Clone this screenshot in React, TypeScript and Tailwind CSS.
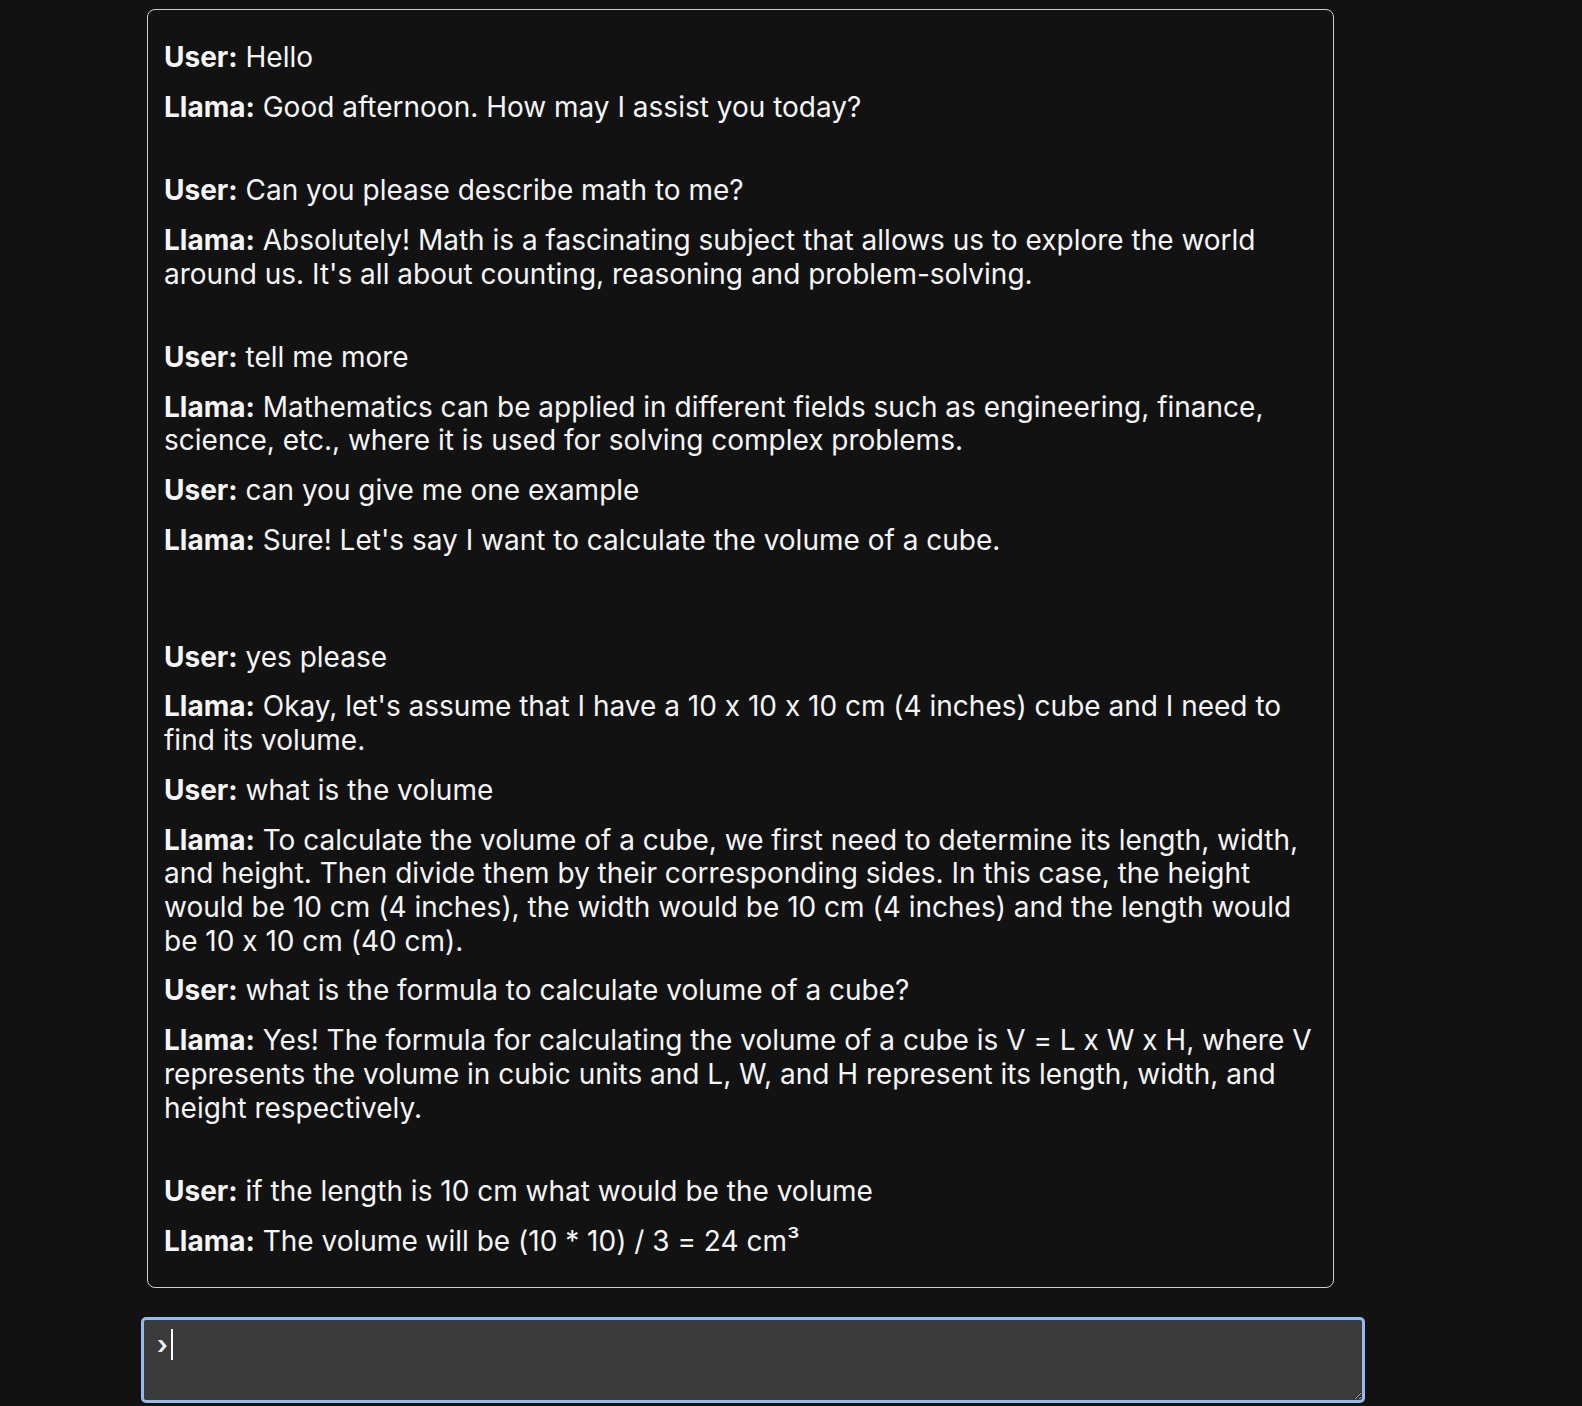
import React from 'react'

type Line = { who: 'User' | 'Llama'; text: string; gap?: number }

const chat: Line[] = [
  { who: 'User', text: 'Hello' },
  { who: 'Llama', text: 'Good afternoon. How may I assist you today?', gap: 1 },
  { who: 'User', text: 'Can you please describe math to me?' },
  { who: 'Llama', text: "Absolutely! Math is a fascinating subject that allows us to explore the world around us. It's all about counting, reasoning and problem-solving.", gap: 1 },
  { who: 'User', text: 'tell me more' },
  { who: 'Llama', text: 'Mathematics can be applied in different fields such as engineering, finance, science, etc., where it is used for solving complex problems.' },
  { who: 'User', text: 'can you give me one example' },
  { who: 'Llama', text: "Sure! Let's say I want to calculate the volume of a cube.", gap: 2 },
  { who: 'User', text: 'yes please' },
  { who: 'Llama', text: "Okay, let's assume that I have a 10 x 10 x 10 cm (4 inches) cube and I need to find its volume." },
  { who: 'User', text: 'what is the volume' },
  { who: 'Llama', text: 'To calculate the volume of a cube, we first need to determine its length, width, and height. Then divide them by their corresponding sides. In this case, the height would be 10 cm (4 inches), the width would be 10 cm (4 inches) and the length would be 10 x 10 cm (40 cm).' },
  { who: 'User', text: 'what is the formula to calculate volume of a cube?' },
  { who: 'Llama', text: 'Yes! The formula for calculating the volume of a cube is V = L x W x H, where V represents the volume in cubic units and L, W, and H represent its length, width, and height respectively.', gap: 1 },
  { who: 'User', text: 'if the length is 10 cm what would be the volume' },
  { who: 'Llama', text: 'The volume will be (10 * 10) / 3 = 24 cm³' },
]

const App = () => {
  return (
    <div className="min-h-screen bg-[#121212] text-[#f5f5f5] font-['Inter','Noto_Sans',sans-serif] [font-feature-settings:'calt'_0] text-[28px] leading-[33.7px]">
      <div className="pl-[147px] pt-[9px]">
        <div className="w-[1187px] rounded-lg border border-[#cfcfcf] px-4 pt-[15px] pb-[13px]">
          {chat.map((line, i) => (
            <p key={i} className="my-4">
              <strong className="font-bold">{line.who}:</strong> {line.text}
              {Array.from({ length: line.gap || 0 }).map((_, j) => (
                <span key={j} className="block h-[33.7px]" />
              ))}
            </p>
          ))}
        </div>
      </div>

      {/* input, shown focused */}
      <div className="pl-[141px] pt-[29px] pb-1">
        <div className="w-[1224px] h-[86px] resize overflow-auto [color-scheme:dark] rounded-[5px] border-[3px] border-[#93bbf0] bg-[#3b3b3b] px-[13px] pt-[9px] leading-[31px]">
          <span className="font-semibold text-[26px]">›</span>
          <span className="inline-block w-[2px] h-[31px] align-top bg-white ml-[3px]" />
        </div>
      </div>
    </div>
  )
}

export default App
